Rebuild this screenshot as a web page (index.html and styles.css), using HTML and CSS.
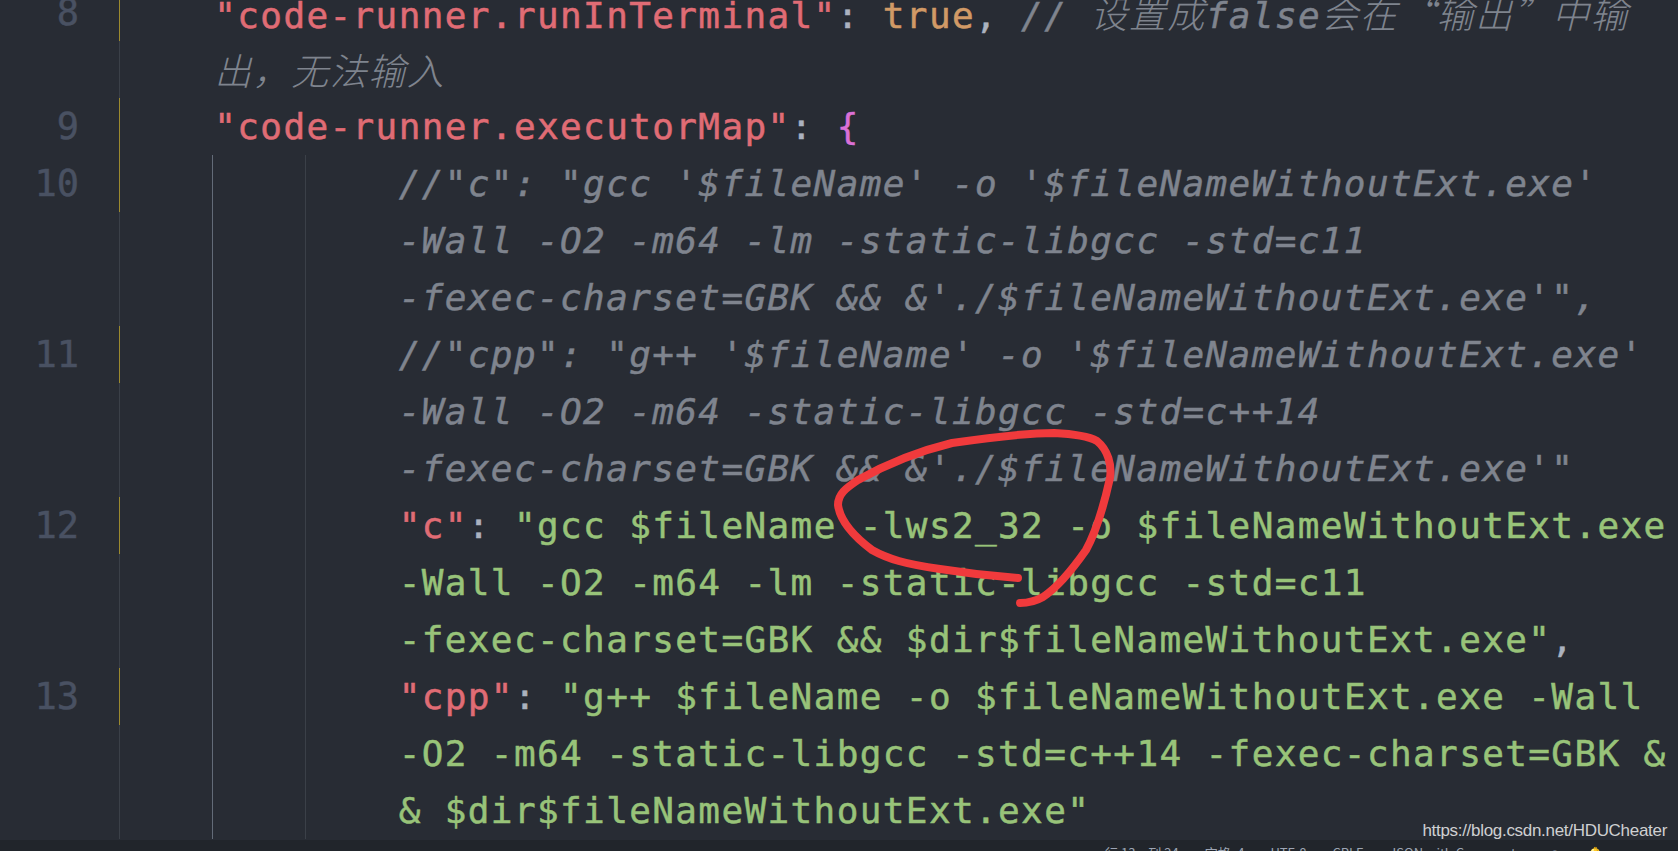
FILE: index.html
```html
<!DOCTYPE HTML>
<html>
	<head>
		<meta http-equiv="Content-Type" content="text/html; charset=UTF-8" />
		<title>settings.json</title>
		<link rel="stylesheet" href="styles.css">
	</head>
	<body>
		<div class="editor">
			<div class="lines">
				<div class="row first"><span class="ln">8</span><div class="code">    <span class="k">"code-runner.runInTerminal"</span><span class="p">: </span><span class="b">true</span><span class="p">,</span><span class="c"> // <span class="cjk">设置成</span>false<span class="cjk">会在“输出”中输</span></span></div></div>
				<div class="row"><span class="ln"></span><div class="code">    <span class="c cjk">出，无法输入</span></div></div>
				<div class="row first"><span class="ln">9</span><div class="code">    <span class="k">"code-runner.executorMap"</span><span class="p">: </span><span class="br">{</span></div></div>
				<div class="row first nested"><span class="ln">10</span><div class="code">            <span class="c">//"c": "gcc '$fileName' -o '$fileNameWithoutExt.exe'</span></div></div>
				<div class="row nested"><span class="ln"></span><div class="code">            <span class="c">-Wall -O2 -m64 -lm -static-libgcc -std=c11</span></div></div>
				<div class="row nested"><span class="ln"></span><div class="code">            <span class="c">-fexec-charset=GBK &amp;&amp; &amp;'./$fileNameWithoutExt.exe'",</span></div></div>
				<div class="row first nested"><span class="ln">11</span><div class="code">            <span class="c">//"cpp": "g++ '$fileName' -o '$fileNameWithoutExt.exe'</span></div></div>
				<div class="row nested"><span class="ln"></span><div class="code">            <span class="c">-Wall -O2 -m64 -static-libgcc -std=c++14</span></div></div>
				<div class="row nested"><span class="ln"></span><div class="code">            <span class="c">-fexec-charset=GBK &amp;&amp; &amp;'./$fileNameWithoutExt.exe'"</span></div></div>
				<div class="row first nested"><span class="ln">12</span><div class="code">            <span class="k">"c"</span><span class="p">: </span><span class="s">"gcc $fileName -lws2_32 -o $fileNameWithoutExt.exe</span></div></div>
				<div class="row nested"><span class="ln"></span><div class="code">            <span class="s">-Wall -O2 -m64 -lm -static-libgcc -std=c11</span></div></div>
				<div class="row nested"><span class="ln"></span><div class="code">            <span class="s">-fexec-charset=GBK &amp;&amp; $dir$fileNameWithoutExt.exe"</span><span class="p">,</span></div></div>
				<div class="row first nested"><span class="ln">13</span><div class="code">            <span class="k">"cpp"</span><span class="p">: </span><span class="s">"g++ $fileName -o $fileNameWithoutExt.exe -Wall</span></div></div>
				<div class="row nested"><span class="ln"></span><div class="code">            <span class="s">-O2 -m64 -static-libgcc -std=c++14 -fexec-charset=GBK &amp;</span></div></div>
				<div class="row nested"><span class="ln"></span><div class="code">            <span class="s">&amp; $dir$fileNameWithoutExt.exe"</span></div></div>
			</div>
		</div>
		<div class="statusbar">
			<span>行 13，列 24</span>
			<span>空格: 4</span>
			<span>UTF-8</span>
			<span>CRLF</span>
			<span>JSON with Comments</span>
			<span>☺</span>
			<span>🔔</span>
		</div>
		<div class="watermark">https://blog.csdn.net/HDUCheater</div>
		<svg class="ink" width="1678" height="851" viewBox="0 0 1678 851">
			<path d="M1020 603 C1030 603 1036 601 1043 597 C1058 587 1072 570 1086 550 C1097 530 1104 505 1110 478 C1112 465 1108 450 1097 441 C1088 436 1075 434 1054 433 C1030 433 1000 436 952 443 C915 452 885 465 858 480 C846 488 838 494 838 505 C840 520 852 535 872 550 C888 559 905 564 940 569 C965 573 990 576 1018 578" />
		</svg>
	</body>
</html>
```

FILE: styles.css
```css
body {
	margin: 0;
	background: #282c34;
	overflow: hidden;
	font-family: "DejaVu Sans Mono", "Noto Sans CJK SC", monospace;
}
.editor {
	height: 840px;
	overflow: hidden;
}
.lines {
	margin-top: -16px;
}
.row {
	display: flex;
	height: 57px;
	font-size: 36px;
	line-height: 57px;
	letter-spacing: 1.38px;
	-webkit-text-stroke: 0.5px currentColor;
}
.ln {
	width: 79px;
	flex-shrink: 0;
	text-align: right;
	color: #495162;
	letter-spacing: 0;
	font-size: 37px;
	margin-right: 40px;
}
.code {
	flex-grow: 1;
	white-space: pre;
	border-left: 1px solid #3b4048;
	padding-left: 2px;
	color: #abb2bf;
}
.row.first .code {
	border-left-color: #9c8a2e;
}
.row.nested .code {
	background:
		linear-gradient(#636b78, #636b78) 92px 0 / 1px 100% no-repeat,
		linear-gradient(#3b4048, #3b4048) 185px 0 / 1px 100% no-repeat;
}
.k {
	color: #e06c75;
}
.p {
	color: #abb2bf;
}
.b {
	color: #d19a66;
}
.br {
	color: #da70d6;
}
.s {
	color: #98c379;
}
.c {
	color: #7f848e;
	font-style: italic;
}
.cjk {
	font-family: "Noto Sans CJK SC", sans-serif;
	font-size: 37px;
	font-weight: 300;
	letter-spacing: 1.5px;
	-webkit-text-stroke: 0;
}
.statusbar {
	height: 22px;
	background: #21252b;
	display: flex;
	gap: 26px;
	padding-left: 1105px;
	font-family: "Noto Sans CJK SC", "Liberation Sans", sans-serif;
	font-size: 13px;
	line-height: 26px;
	color: #9da5b4;
	white-space: nowrap;
}
.watermark {
	position: absolute;
	right: 11px;
	top: 821px;
	font-family: "Liberation Sans", Arial, sans-serif;
	font-size: 17px;
	color: #cfd0d2;
	letter-spacing: -0.3px;
}
.ink {
	position: absolute;
	left: 0;
	top: 0;
	pointer-events: none;
}
.ink path {
	fill: none;
	stroke: #f03a3c;
	stroke-width: 8;
	stroke-linecap: round;
	stroke-linejoin: round;
}
```
